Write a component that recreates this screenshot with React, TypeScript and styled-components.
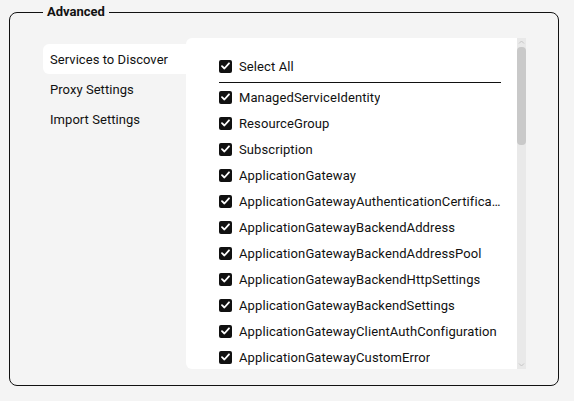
import React from "react";
import styled, { createGlobalStyle } from "styled-components";

const GlobalStyle = createGlobalStyle`
  html, body {
    margin: 0;
    padding: 0;
    background: #f4f4f4;
    font-family: Roboto, "Liberation Sans", Arial, sans-serif;
    color: #111;
  }
`;

const Page = styled.div`
  padding: 4px 15px 0 9px;
  width: 574px;
  box-sizing: border-box;
`;

const Fieldset = styled.fieldset`
  margin: 0;
  min-width: 0;
  width: 550px;
  box-sizing: border-box;
  border: 1px solid #111;
  border-radius: 8px;
  padding: 18px 32px 16px 33px;
`;

const Legend = styled.legend`
  padding: 0 4px;
  font-size: 13px;
  line-height: 16px;
  font-weight: 700;
  color: #111;
`;

const Body = styled.div`
  display: flex;
  align-items: flex-start;
`;

const TabList = styled.div`
  width: 143px;
  flex: 0 0 143px;
  margin-top: 6px;
  display: flex;
  flex-direction: column;
`;

const Tab = styled.div<{ $active?: boolean }>`
  height: 30px;
  display: flex;
  align-items: center;
  padding-left: 7px;
  font-size: 13px;
  letter-spacing: 0.05px;
  color: #111;
  background: ${(p) => (p.$active ? "#fff" : "transparent")};
  border-radius: 6px 0 0 6px;
`;

const Panel = styled.div`
  flex: 1;
  min-width: 0;
  height: 331px;
  background: #fff;
  border-radius: 6px 0 0 6px;
  display: flex;
  overflow: hidden;
`;

const ScrollArea = styled.div`
  flex: 1;
  min-width: 0;
  height: 100%;
  overflow: hidden;
  box-sizing: border-box;
  padding: 15px 16px 23px 33px;
`;

const Scrollbar = styled.div`
  flex: 0 0 9px;
  height: 100%;
  background: #e9e9e9;
  display: flex;
  flex-direction: column;
  align-items: center;
`;

const ScrollButton = styled.div`
  height: 9px;
  width: 9px;
  display: flex;
  align-items: center;
  justify-content: center;
`;

const Thumb = styled.div`
  width: 9px;
  height: 98px;
  background: #c9c9c9;
  border-radius: 4px;
`;

const Spacer = styled.div`
  flex: 1;
`;

const Row = styled.label`
  height: 26px;
  display: flex;
  align-items: center;
  gap: 7px;
  font-size: 13px;
  letter-spacing: 0.1px;
  color: #111;
  min-width: 0;
`;

const Box = styled.span`
  flex: 0 0 13px;
  width: 13px;
  height: 13px;
  border-radius: 2px;
  background: #111;
  display: flex;
  align-items: center;
  justify-content: center;
`;

const Label = styled.span`
  white-space: nowrap;
  overflow: hidden;
  text-overflow: ellipsis;
  min-width: 0;
`;

const Separator = styled.div`
  height: 1px;
  background: #111;
  margin: 3px 0 1px;
`;

const items = [
  "ManagedServiceIdentity",
  "ResourceGroup",
  "Subscription",
  "ApplicationGateway",
  "ApplicationGatewayAuthenticationCertificate",
  "ApplicationGatewayBackendAddress",
  "ApplicationGatewayBackendAddressPool",
  "ApplicationGatewayBackendHttpSettings",
  "ApplicationGatewayBackendSettings",
  "ApplicationGatewayClientAuthConfiguration",
  "ApplicationGatewayCustomError",
  "ApplicationGatewayFirewallDisabledRuleGroup",
  "ApplicationGatewayFirewallExclusion",
  "ApplicationGatewayFrontendIPConfiguration",
];

const Check = () => (
  <Box>
    <svg width="9" height="8" viewBox="0 0 9 8">
      <path d="M1 4.2 L3.4 6.5 L8 1.3" fill="none" stroke="#fff" strokeWidth="1.8" strokeLinecap="round" strokeLinejoin="round" />
    </svg>
  </Box>
);

const Chevron = ({ down }: { down?: boolean }) => (
  <svg width="9" height="9" viewBox="0 0 9 9">
    <path
      d={down ? "M2 3.5 L4.5 6 L7 3.5" : "M2 5.5 L4.5 3 L7 5.5"}
      fill="none"
      stroke="#c6c6c6"
      strokeWidth="1"
    />
  </svg>
);

export default function App() {
  return (
    <Page>
      <GlobalStyle />
      <Fieldset>
        <Legend>Advanced</Legend>
        <Body>
          <TabList>
            <Tab $active>Services to Discover</Tab>
            <Tab>Proxy Settings</Tab>
            <Tab>Import Settings</Tab>
          </TabList>
          <Panel>
            <ScrollArea>
              <Row>
                <Check />
                <Label>Select All</Label>
              </Row>
              <Separator />
              {items.map((it) => (
                <Row key={it}>
                  <Check />
                  <Label>{it}</Label>
                </Row>
              ))}
            </ScrollArea>
            <Scrollbar>
              <ScrollButton>
                <Chevron />
              </ScrollButton>
              <Thumb />
              <Spacer />
              <ScrollButton>
                <Chevron down />
              </ScrollButton>
            </Scrollbar>
          </Panel>
        </Body>
      </Fieldset>
    </Page>
  );
}
